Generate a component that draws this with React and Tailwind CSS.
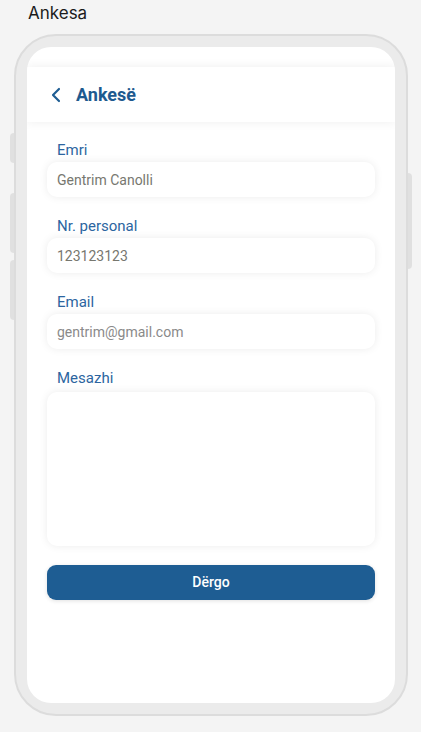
import React from "react";
import { FiChevronLeft } from "react-icons/fi";

const fields = [
  { label: "Emri", value: "Gentrim Canolli" },
  { label: "Nr. personal", value: "123123123" },
  { label: "Email", placeholder: "gentrim@gmail.com" },
];

const labelClass = "block h-5 leading-5 text-[15px] text-[#2c65a0] pl-[10px]";
const boxClass =
  "w-full rounded-[10px] bg-white shadow-[0_0_8px_rgba(0,0,0,0.08)] px-[10px] text-[14px] text-[#77776f] placeholder-[#8a8a8a] focus:outline-none";

const Field = ({ label, value, placeholder }) => (
  <div>
    <label className={`${labelClass} mb-[2px]`}>{label}</label>
    <input
      type="text"
      defaultValue={value}
      placeholder={placeholder}
      className={`${boxClass} h-[35px]`}
    />
  </div>
);

export default function App() {
  return (
    <div className="min-h-[732px] bg-[#f4f4f4] pt-px font-['Roboto',sans-serif]">
      {/* page title */}
      <h1 className="pl-[28px] h-6 leading-6 text-[17px] text-[#1b1b1b] font-['Inter',sans-serif]">Ankesa</h1>

      {/* phone frame */}
      <div className="relative ml-[14px] mt-[9px] w-[394px] h-[682px] rounded-[42px] border-2 border-[#dcdcdc] bg-[#ebebeb] p-[11px]">
        {/* side buttons */}
        <div className="absolute -left-[6px] top-[97px] w-[4px] h-[30px] rounded-l bg-[#e0e0e0]" />
        <div className="absolute -left-[6px] top-[157px] w-[4px] h-[60px] rounded-l bg-[#e0e0e0]" />
        <div className="absolute -left-[6px] top-[224px] w-[4px] h-[60px] rounded-l bg-[#e0e0e0]" />
        <div className="absolute -right-[6px] top-[137px] w-[4px] h-[96px] rounded-r bg-[#e0e0e0]" />

        {/* screen */}
        <div className="h-full rounded-[24px] bg-white overflow-hidden flex flex-col">
          <div className="h-5 shrink-0" />

          {/* header */}
          <div className="relative z-10 h-[55px] shrink-0 bg-white shadow-[0_0_10px_rgba(0,0,0,0.07)] flex items-center pl-[17px] gap-[8px]">
            <FiChevronLeft className="text-[#1e5d93] w-[24px] h-[24px]" strokeWidth={2.2} />
            <span className="text-[18px] font-bold text-[#1e5a8f]">Ankesë</span>
          </div>

          {/* form */}
          <form className="px-5 pt-[18px] flex flex-col gap-[19px]">
            {fields.map((f) => (
              <Field key={f.label} {...f} />
            ))}

            <div>
              <label className={`${labelClass} mb-1`}>Mesazhi</label>
              <textarea className={`${boxClass} h-[154px] py-2 resize-none block`} />
            </div>

            <button
              type="button"
              className="h-[35px] rounded-[9px] bg-[#1e5d93] text-white text-[14px] font-medium shadow-[0_1px_4px_rgba(0,0,0,0.12)]"
            >
              Dërgo
            </button>
          </form>
        </div>
      </div>
    </div>
  );
}
